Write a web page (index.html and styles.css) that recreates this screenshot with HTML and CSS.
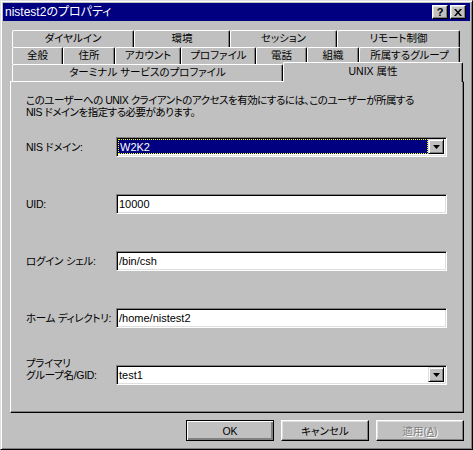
FILE: index.html
```html
<!DOCTYPE html>
<html lang="ja">
<head>
<meta charset="utf-8">
<title>nistest2のプロパティ</title>
<link rel="stylesheet" href="styles.css">
</head>
<body>
<div class="window">
  <div class="titlebar">
    <span class="title">nistest2のプロパティ</span>
    <div class="tbtns">
      <div class="tbtn help">?</div>
      <div class="tbtn close"><svg width="8" height="7" viewBox="0 0 8 7"><path d="M0 0h2l2 2.5L6 0h2L5 3.5 8 7H6L4 4.5 2 7H0l3-3.5z" fill="#000"/></svg></div>
    </div>
  </div>
  <div class="body">
    <div class="tabs">
      <div class="tabrow">
        <div class="tab w122">ダイヤルイン</div>
        <div class="tab w96">環境</div>
        <div class="tab w107">セッション</div>
        <div class="tab w123">リモート制御</div>
      </div>
      <div class="tabrow">
        <div class="tab w51">全般</div>
        <div class="tab w52">住所</div>
        <div class="tab w66">アカウント</div>
        <div class="tab w75">プロファイル</div>
        <div class="tab w51">電話</div>
        <div class="tab w52">組織</div>
        <div class="tab w101">所属するグループ</div>
      </div>
      <div class="tabrow">
        <div class="tab w271">ターミナル サービスのプロファイル</div>
        <div class="tab sel w180">UNIX 属性</div>
      </div>
    </div>
    <div class="panel">
      <p class="desc">このユーザーへの UNIX クライアントのアクセスを有効にするには、このユーザーが所属する<br>NIS ドメインを指定する必要があります。</p>
      <div class="form">
        <div class="row">
          <span class="label">NIS ドメイン:</span>
          <div class="field combo">
            <span class="value focused">W2K2</span>
            <span class="dropbtn"><svg width="7" height="4" viewBox="0 0 7 4"><path d="M0 0h7L3.5 4z" fill="#000"/></svg></span>
          </div>
        </div>
        <div class="row">
          <span class="label">UID:</span>
          <div class="field"><span class="value">10000</span></div>
        </div>
        <div class="row">
          <span class="label">ログイン シェル:</span>
          <div class="field"><span class="value">/bin/csh</span></div>
        </div>
        <div class="row">
          <span class="label">ホーム ディレクトリ:</span>
          <div class="field"><span class="value">/home/nistest2</span></div>
        </div>
        <div class="row bottom">
          <span class="label two">プライマリ<br>グループ名/GID:</span>
          <div class="field combo">
            <span class="value">test1</span>
            <span class="dropbtn"><svg width="7" height="4" viewBox="0 0 7 4"><path d="M0 0h7L3.5 4z" fill="#000"/></svg></span>
          </div>
        </div>
      </div>
    </div>
    <div class="buttons">
      <div class="btn default">OK</div>
      <div class="btn">キャンセル</div>
      <div class="btn disabled">適用(<u>A</u>)</div>
    </div>
  </div>
</div>
</body>
</html>
```

FILE: styles.css
```css
* { box-sizing: border-box; }
html, body { margin: 0; padding: 0; }
body {
  width: 473px;
  height: 450px;
  background: #c0c0c0;
  font-family: "Liberation Sans", "Noto Sans CJK JP", sans-serif;
  font-size: 10.5px;
  font-feature-settings: "palt" 1;
  color: #000;
  overflow: hidden;
}
.window {
  width: 473px;
  height: 450px;
  background: #c0c0c0;
  border: 1px solid;
  border-color: #dfdfdf #000 #000 #dfdfdf;
  box-shadow: inset 1px 1px #fff, inset -1px -1px #808080;
  padding: 2px;
  display: flex;
  flex-direction: column;
}
.titlebar {
  height: 18px;
  background: #000080;
  color: #fff;
  display: flex;
  align-items: center;
  justify-content: space-between;
  padding: 0 4px 0 2px;
}
.title { line-height: 18px; white-space: nowrap; font-size: 12px; }
.tbtns { display: flex; gap: 2px; }
.tbtn {
  width: 16px;
  height: 14px;
  background: #c0c0c0;
  border: 1px solid;
  border-color: #fff #000 #000 #fff;
  box-shadow: inset -1px -1px #808080, inset 1px 1px #dfdfdf;
  display: flex;
  align-items: center;
  justify-content: center;
  color: #000;
  font-weight: bold;
  font-size: 11px;
  line-height: 12px;
}
.body {
  flex: 1;
  padding: 9px 6px 0 7px;
  display: flex;
  flex-direction: column;
}
.tabs { padding: 0 4px 0 2px; }
.tabrow { display: flex; height: 17px; }
.tab {
  height: 17px;
  flex: none;
  background: #c0c0c0;
  border-top: 1px solid #fff;
  border-left: 1px solid #fff;
  border-right: 1px solid #000;
  border-radius: 2px 2px 0 0;
  box-shadow: inset -1px 0 #808080;
  text-align: center;
  line-height: 15px;
  white-space: nowrap;
}
.tab.sel {
  height: 20px;
  margin-top: -2px;
  margin-bottom: -1px;
  position: relative;
  z-index: 1;
  line-height: 17px;
}
.w51 { width: 51px; }
.w52 { width: 52px; }
.w66 { width: 66px; }
.w75 { width: 75px; }
.w96 { width: 96px; }
.w101 { width: 101px; }
.w107 { width: 107px; }
.w122 { width: 122px; }
.w123 { width: 123px; }
.w180 { width: 180px; }
.w271 { width: 271px; }
.panel {
  width: 454px;
  height: 332px;
  border-top: 1px solid #fff;
  border-left: 1px solid #fff;
  border-right: 1px solid #000;
  border-bottom: 1px solid #000;
  box-shadow: inset -1px -1px #808080;
  padding: 12px 0 0 15px;
}
.desc {
  margin: 0;
  line-height: 12px;
  white-space: nowrap;
  letter-spacing: -0.5px;
}
.form {
  margin-top: 19px;
  display: flex;
  flex-direction: column;
  gap: 37px;
}
.row {
  display: flex;
  align-items: center;
  height: 20px;
}
.row.bottom { align-items: flex-end; }
.label {
  width: 90px;
  flex: none;
  white-space: nowrap;
  line-height: 12px;
  letter-spacing: -0.3px;
}
.label.two { padding-bottom: 4px; }
.field {
  width: 331px;
  height: 20px;
  background: #fff;
  border: 1px solid;
  border-color: #808080 #fff #fff #808080;
  box-shadow: inset 1px 1px #000, inset -1px -1px #dfdfdf;
  padding: 1px 2px 2px 1px;
  display: flex;
  align-items: stretch;
  font-size: 11px;
}
.value {
  flex: 1;
  line-height: 16px;
  padding-left: 1px;
  white-space: nowrap;
}
.value.focused {
  background: #000080;
  color: #fff;
  outline: 1px dotted #ffff00;
  outline-offset: -1px;
  padding-left: 2px;
}
.dropbtn {
  width: 16px;
  flex: none;
  background: #c0c0c0;
  border: 1px solid;
  border-color: #dfdfdf #000 #000 #dfdfdf;
  box-shadow: inset 1px 1px #fff, inset -1px -1px #808080;
  display: flex;
  align-items: center;
  justify-content: center;
}
.buttons {
  margin-top: 7px;
  display: flex;
  justify-content: flex-end;
  gap: 7px;
}
.btn {
  width: 88px;
  height: 21px;
  background: #c0c0c0;
  border: 1px solid;
  border-color: #fff #000 #000 #fff;
  box-shadow: inset -1px -1px #808080, inset 1px 1px #dfdfdf;
  display: flex;
  align-items: center;
  justify-content: center;
  white-space: nowrap;
}
.btn.default {
  border: 1px solid #000;
  box-shadow: inset 1px 1px #fff, inset -1px -1px #808080, inset -2px -2px #808080;
}
.btn.disabled {
  color: #808080;
  text-shadow: 1px 1px #fff;
}
```
